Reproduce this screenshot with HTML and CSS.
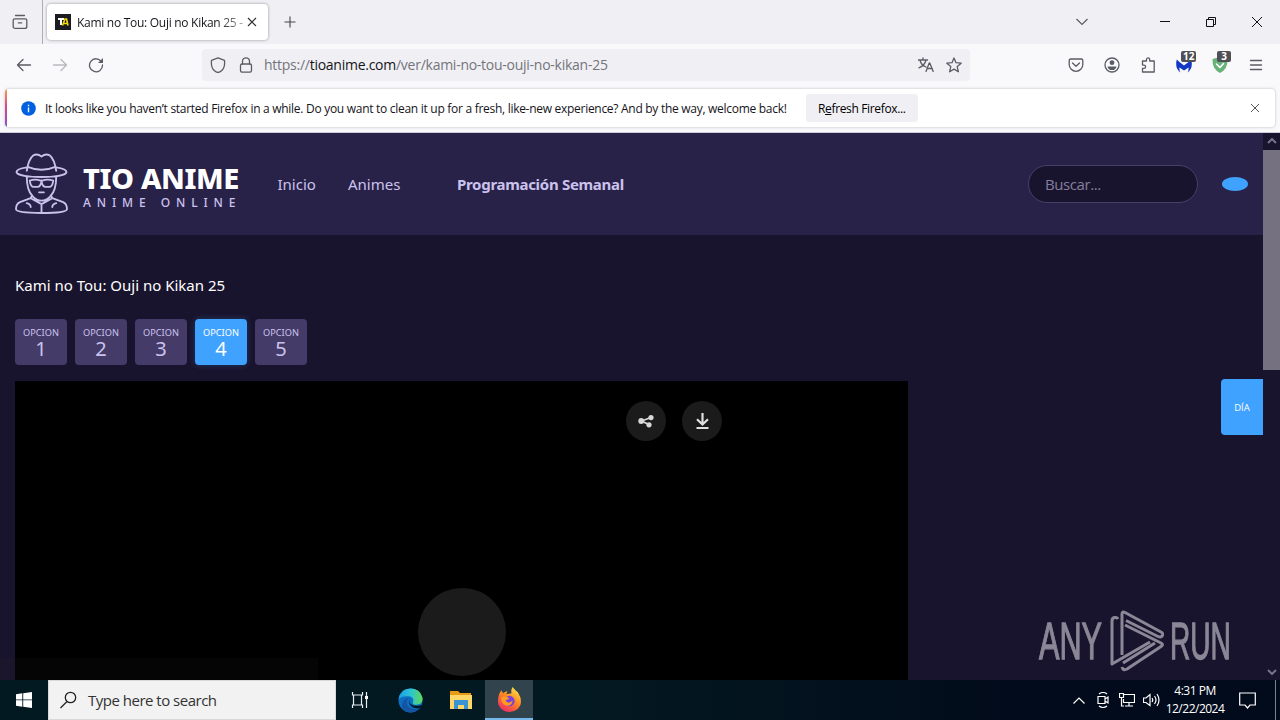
FILE: index.html
```
<!DOCTYPE html>
<html lang="es">
<head>
<meta charset="utf-8">
<title>Kami no Tou: Ouji no Kikan 25 - TioAnime</title>
<link rel="stylesheet" href="styles.css">
</head>
<body>
<div class="screen">
  <div class="tabbar">
    <div class="firefox-view"><svg class="i16" viewBox="0 0 16 16"><path d="M3.500 1.500h9M2.600 4.800h10.800q1.400 0 1.400 1.400v6.200q0 2-2 2H3.200q-2 0-2-2V6.200Q1.200 4.800 2.600 4.800zM6.300 8.800h3.400"/></svg></div>
    <div class="tab">
      <svg class="favicon" viewBox="0 0 16 16"><rect width="16" height="16" fill="#1c1b22"/><path d="M3 5h6M6 5v6" stroke="#fff" stroke-width="2" fill="none"/><path d="M7.500 11.500 10 5h1.500L13 11.500M9 9.500h3" stroke="#f5d90a" stroke-width="1.600" fill="none"/></svg>
      <span class="tab-title">Kami no Tou: Ouji no Kikan 25 -</span>
      <svg class="tab-close" viewBox="0 0 10 10"><path d="M1 1l8 8M9 1l-8 8"/></svg>
    </div>
    <svg class="newtab" viewBox="0 0 12 12"><path d="M6 .5v11M.5 6h11"/></svg>
    <div class="window-controls">
      <svg class="chev" viewBox="0 0 12 8"><path d="M.5 1 6 6.500 11.500 1"/></svg>
      <svg class="wc min" viewBox="0 0 10 10"><path d="M0 4.500h10"/></svg>
      <svg class="wc restore" viewBox="0 0 10 10"><path d="M.5 2.500h7v7h-7zM2.500 2.500v-2h7v7h-2"/></svg>
      <svg class="wc" viewBox="0 0 10 10"><path d="M0 0l10 10M10 0 0 10"/></svg>
    </div>
  </div>

  <div class="toolbar">
    <svg class="i16 back" viewBox="0 0 16 16"><path d="M14.500 8H1.500M7 2.500 1.500 8 7 13.500"/></svg>
    <svg class="i16 forward" viewBox="0 0 16 16"><path d="M1.500 8h13M9 2.500 14.500 8 9 13.500"/></svg>
    <svg class="i16 reload" viewBox="0 0 16 16"><path d="M13.500 4.800A6.500 6.500 0 1 0 14.500 8"/><path d="M15 1v5h-5z" fill="#5b5b66" stroke="none"/></svg>
    <div class="urlbar">
      <svg class="i16 shield" viewBox="0 0 16 16"><path d="M8 .8 14.500 3.300q.7 7-2.500 10Q10 15.200 8 15.500 6 15.200 4 13.300.800 10.300 1.500 3.300z"/></svg>
      <svg class="i16 lock" viewBox="0 0 16 16"><rect x="2.500" y="7" width="11" height="8.200" rx="1.600"/><path d="M4.500 7V4.300a3.500 3.500 0 0 1 7 0V7"/></svg>
      <span class="url">https://<b>tioanime.com</b>/ver/kami-no-tou-ouji-no-kikan-25</span>
      <svg class="i16 translate" viewBox="0 0 16 16"><path d="M.5 3h9M5 .8V3M2 3q1 5 6 7M8 3Q7 8 1 10.800M8 14.500l3.200-8.500h.6l3.400 8.500M9.300 11.500h5"/></svg>
      <svg class="i16 star" viewBox="0 0 16 16"><path d="M8 1l2 4.700 5.200.5-4 3.400 1.200 5.200L8 12.100l-4.400 2.700 1.200-5.200-4-3.400L6 5.700z"/></svg>
    </div>
    <div class="tools">
      <svg class="i16 pocket" viewBox="0 0 16 16"><path d="M2.700 2h10.600q1.500 0 1.500 1.500V7.500a6.800 6.800 0 0 1-13.600 0V3.500Q1.200 2 2.700 2zM4.500 6 8 9.300 11.500 6"/></svg>
      <svg class="i16" viewBox="0 0 16 16"><circle cx="8" cy="8" r="7"/><circle cx="8" cy="5.700" r="2.400" fill="#5b5b66" stroke="none"/><path d="M3.500 9.400h9q-.8 3.600-4.500 3.600T3.500 9.400z" fill="#5b5b66" stroke="none"/></svg>
      <svg class="i16" viewBox="0 0 16 16"><path d="M2.500 4h4V2.500a1.600 1.600 0 0 1 3.200 0V4h4.500v11H2.500v-3.700H4a1.600 1.600 0 0 0 0-3.200H2.500z"/></svg>
      <div class="ext"><svg class="i16" viewBox="0 0 16 16"><path d="M4.500 15.500Q-1.500 11 .8 2.500 3 5 8 8.500 13 5 15.200 2.500 17.500 11 11.500 15.500q1.500-2.500 1-5L8 13.500l-4.500-3q-.5 2.500 1 5z" fill="#1437c8" stroke="none"/></svg><span class="badge">12</span></div>
      <div class="ext"><svg class="i16" viewBox="0 0 16 16"><path d="M8 0 15.500 2q.5 10-7.500 14Q0 12 .5 2z" fill="#67b279" stroke="none"/><path d="M4.500 7 8 10.500 11.500 6.500" stroke="#fff" stroke-width="1.600"/></svg><span class="badge">3</span></div>
      <svg class="i16 menu" viewBox="0 0 16 16"><path d="M2.500 3.500h11M2.500 8h11M2.500 12.500h11"/></svg>
    </div>
  </div>

  <div class="notice-row">
    <div class="notice">
      <svg class="info" viewBox="0 0 16 16"><circle cx="8" cy="8" r="7.800" fill="#0060df"/><path d="M8 7v5M8 4v1.500" stroke="#fff" stroke-width="1.500"/></svg>
      <span class="notice-text">It looks like you haven’t started Firefox in a while. Do you want to clean it up for a fresh, like-new experience? And by the way, welcome back!</span>
      <div class="refresh"><span>R<u>e</u>fresh Firefox...</span></div>
      <svg class="notice-close" viewBox="0 0 10 10"><path d="M1 1l8 8M9 1l-8 8"/></svg>
    </div>
  </div>

  <div class="viewport">
    <div class="site">
      <div class="header">
        <svg class="logo" viewBox="0 0 54 62"><path d="M12 18q2-12 6.500-15.500 4-2.500 8.500 1 4.500-3.500 8.500-1Q40 6 42 18M13 14q14 6 28 0M12 14.500C4 15.500 1.500 17.500 1.500 19.500c2 6.500 49 6.500 51 0 0-2-3-4-10.500-5M12 24q0 14 6 20 4 4.500 9 4.500t9-4.500q6-6 6-20M15 28q6-2 11 0h2q5-2 11 0-1 6.500-4 6.500h-4q-3 0-4-5.500-1 5.500-4 5.500h-4q-3 0-4-6.500M24.500 40h5M17 44l-1 2-11 4q-4 2-4 7 0 4 26 4t26-4q0-5-4-7l-11-4-1-2M16 46l11 6 11-6M27 52v9M12 51q4 1 4 4M42 51q-4 1-4 4"/></svg>
        <div class="brand"><span class="brand-name">TIO ANIME</span><span class="brand-sub">ANIME ONLINE</span></div>
        <span class="nav n1">Inicio</span><span class="nav n2">Animes</span><span class="nav n3">Programación Semanal</span>
        <div class="search">Buscar...</div>
        <span class="pill"></span>
      </div>
      <div class="content">
        <h1 class="title"><span>Kami no Tou: Ouji no Kikan 25</span></h1>
        <div class="options">
          <div class="option"><small>OPCION</small><span>1</span></div>
          <div class="option"><small>OPCION</small><span>2</span></div>
          <div class="option"><small>OPCION</small><span>3</span></div>
          <div class="option active"><small>OPCION</small><span>4</span></div>
          <div class="option"><small>OPCION</small><span>5</span></div>
        </div>
        <div class="player">
          <div class="player-actions">
            <div class="round"><svg viewBox="0 0 16 16"><path d="M13 4.500 3.500 8l8 3.800" fill="none" stroke="#d8d8d8" stroke-width="1.700"/><g fill="#d8d8d8"><circle cx="13" cy="4.600" r="2.600"/><circle cx="3.200" cy="8" r="2.900"/><circle cx="11" cy="11.800" r="2.600"/></g></svg></div>
            <div class="round"><svg viewBox="0 0 16 16"><path d="M8.500 0v11M3 6.300l5.500 5.200L14 6.300M2.500 15h12" fill="none" stroke="#e0e0e0" stroke-width="2.200"/></svg></div>
          </div>
          <div class="play"></div>
        </div>
      </div>
      <div class="day">DÍA</div>
      <div class="status-hint"></div>
      <div class="watermark">
        <span class="wm any">ANY</span>
        <svg class="wm-logo" viewBox="0 0 54 62"><path d="M8 9Q7 7 4.500 7.500 2 8 2 11v43l38-22M12 45V4q0-3 3-1.500L51 22q3 2 1 4-1.500 2-6-.5L16 10.500M15 15l36 18q3 1.500 0 3.500L17 59q-4 2-5-2M13 53l32-20"/></svg>
        <span class="wm run">RUN</span>
      </div>
    </div>
    <div class="scrollbar">
      <svg class="arrow" viewBox="0 0 10 6"><path d="M1 5 5 1l4 4"/></svg>
      <div class="thumb"></div>
      <svg class="arrow down" viewBox="0 0 10 6"><path d="M1 1l4 4 4-4"/></svg>
    </div>
  </div>

  <div class="taskbar">
    <div class="cell"><svg width="16" height="16" viewBox="0 0 16 16"><path d="M0 2.200 6.300 1.300V7.500H0zM7.200 1.200 16 0v7.500H7.200zM0 8.300h6.300v6.400L0 13.800zM7.200 8.300H16V16L7.200 14.800z" fill="#fff"/></svg></div>
    <div class="tasksearch"><svg width="18" height="18" viewBox="0 0 18 18"><circle cx="10.500" cy="6.500" r="5.200"/><path d="M7 10.500.5 17"/></svg><span>Type here to search</span></div>
    <div class="cell"><svg width="18" height="18" viewBox="0 0 18 18" fill="none" stroke="#e8eef0" stroke-width="1.200"><path d="M1.500 1v3h10V1M1.500 17v-3h10v3M2.500 4v10M10.500 4v10M15.500 1v16"/><path d="M14 5h3v3h-3z" fill="#fff" stroke="none"/></svg></div>
    <div class="cell edge"><svg width="25" height="25" viewBox="0 0 24 24"><defs><linearGradient id="eg" x1="0" x2="1"><stop offset="0" stop-color="#1b9de2"/><stop offset=".5" stop-color="#2cc3d5"/><stop offset="1" stop-color="#62d957"/></linearGradient></defs><circle cx="12" cy="12" r="11.500" fill="#0c6fc4"/><path d="M.6 11Q2 .5 12 .5 21 .5 23.500 9q1 7-6 7-4 0-3-3 1-4-4-5Q4 7 .6 11z" fill="url(#eg)"/><path d="M10.500 9.500q-4 3-1 8 4 5 12 1-4 5-10 5Q2 22 4 15q1-5 6.500-5.500z" fill="#1554a0"/><path d="M11.500 10q-2 3 1 5.500t9.500 1l1 .5-1 1.800q-6 1.700-9.500-1.500-3.500-4-1-7.300z" fill="#031921"/></svg></div>
    <div class="cell"><svg width="22" height="20" viewBox="0 0 22 20"><path d="M0 1h8l2 2h11v5H0z" fill="#e89a13"/><path d="M0 5h22v14H0z" fill="#ffd768"/><path d="M4 19v-9h14v9h-4v-4H8v4z" fill="#3b93d3"/></svg></div>
    <div class="cell fx"><svg width="25" height="25" viewBox="0 0 24 24"><defs><linearGradient id="fg" x1=".8" y1="0" x2=".2" y2="1"><stop offset="0" stop-color="#ffe74a"/><stop offset=".45" stop-color="#ff8a1f"/><stop offset="1" stop-color="#f0246c"/></linearGradient></defs><path d="M2 7 4 3l2 3q2-2 4-2l-1 3 5-1q-1-3 1-6 3 4 5 5l1 2q2 3 2 7a11 10 0 0 1-22 0q0-4 1-7z" fill="url(#fg)"/><circle cx="12" cy="13.500" r="5" fill="#7b42d8"/><path d="M4 10q4-2 8 1l-4 2q3 4 7 0-1 7-8 4-3-2-3-7z" fill="#ff9a22"/></svg></div>
    <div class="tray">
      <svg class="up" viewBox="0 0 12 7"><path d="M.5 6.500 6 1l5.500 5.500"/></svg>
      <svg class="meet" viewBox="0 0 12 16"><path d="M1 4.500h7v7H1zM8 7l3-2v6L8 9M2 2q4-3 8 0M2 14q4 3 8 0"/></svg>
      <svg class="net" viewBox="0 0 16 14"><path d="M5 1.500h10.500v8H4.500V6M10 9.500V13M6 13h8M.5.5h4v4h-4zM2.500 4.500V13H5"/></svg>
      <svg class="vol" viewBox="0 0 17 14"><path d="M.5 5h2.500l4-3.500v11L3 9.500H.5zM9 5q1.500 2 0 4M11.500 3q3 4 0 8M14 1q4 6 0 12"/></svg>
      <div class="clock"><span>4:31 PM</span><span class="date">12/22/2024</span></div>
      <svg class="note" viewBox="0 0 17 17"><path d="M.7 1h15.600v12H11l-2.500 3L6 13H.7z"/></svg>
      <span class="desk"></span>
    </div>
  </div>
</div>
</body>
</html>
```
FILE: styles.css
```
* { box-sizing: border-box; }
body { margin: 0; font-family: "Open Sans", "Noto Sans", sans-serif; overflow: hidden; }
.screen { width: 1280px; height: 720px; display: flex; flex-direction: column; white-space: nowrap; }
svg { flex: none; display: block; }
.i16 { width: 16px; height: 16px; fill: none; stroke: #5b5b66; stroke-width: 1.300; stroke-linejoin: round; stroke-linecap: round; }

.tabbar { height: 44px; background: #f0f0f4; display: flex; align-items: center; flex: none; }
.firefox-view { width: 43px; height: 44px; border-right: 1px solid #aeaeb5; padding: 14px 0 0 12px; }
.tab { width: 221px; height: 36px; margin-left: 4px; background: #fff; border-radius: 4px; box-shadow: 0 0 3px rgba(0,0,0,.4); display: flex; align-items: center; padding-left: 8px; }
.favicon { width: 16px; height: 16px; }
.tab-title { width: 167px; margin-left: 6px; overflow: hidden; font-size: 12px; letter-spacing: -.28px; color: #15141a; -webkit-mask-image: linear-gradient(90deg, #000 140px, rgba(0,0,0,.35) 167px); mask-image: linear-gradient(90deg, #000 140px, rgba(0,0,0,.35) 167px); }
.tab-close { width: 10px; height: 10px; margin-left: 3px; stroke: #333; stroke-width: 1.200; }
.newtab { width: 12px; height: 12px; margin-left: 16px; stroke: #444; stroke-width: 1.100; }
.window-controls { margin-left: auto; display: flex; align-items: center; padding-right: 18px; }
.chev { width: 12px; height: 8px; fill: none; stroke: #5b5b66; stroke-width: 1.200; margin-right: 72px; }
.wc { width: 10px; height: 10px; fill: none; stroke: #111; stroke-width: 1; }
.wc.min, .wc.restore { margin-right: 36px; }

.toolbar { height: 44px; background: #f9f9fb; display: flex; align-items: center; flex: none; padding: 0 16px 3px; }
.forward { margin-left: 20px; opacity: .4; }
.reload { margin-left: 20px; }
.urlbar { width: 768px; height: 32px; margin: 0 0 0 98px; background: #f0f0f4; border-radius: 4px; display: flex; align-items: center; padding: 0 8px; }
.lock { margin-left: 12px; }
.url { font-size: 14px; letter-spacing: -.26px; color: #74747c; margin-left: 10px; }
.url b { font-weight: 400; color: #15141a; }
.translate { margin-left: auto; }
.star { margin-left: 12px; }
.tools { margin-left: auto; display: flex; gap: 20px; }
.ext { position: relative; }
.badge { position: absolute; left: 5px; top: -6px; height: 11px; background: #4f4f55; color: #fff; border-radius: 2px; font: bold 10px/11px "Open Sans", sans-serif; padding: 0 2px; min-width: 14px; text-align: center; }

.notice-row { height: 45px; background: #f9f9fb; padding: 1px 5px 0; flex: none; border-bottom: 1px solid #ccccda; }
.notice { height: 38px; background: linear-gradient(#ff9a4a, #d44a8c 45%, #8a50c8) 0 0 / 2px 100% no-repeat, #fff; border-radius: 4px; box-shadow: 0 0 3px rgba(0,0,0,.25); display: flex; align-items: center; padding: 0 15px 0 16px; }
.info { width: 15px; height: 15px; }
.notice-text { font-size: 12px; margin-left: 9px; width: 743px; letter-spacing: -.285px; color: #15141a; }
.refresh { width: 112px; height: 28px; margin-left: 18px; background: #f0f0f4; border-radius: 3px; font-size: 12px; letter-spacing: -.35px; display: flex; align-items: center; padding-left: 12px; }
.notice-close { width: 10px; height: 10px; margin-left: auto; stroke: #555; }

.viewport { flex: 1; min-height: 0; display: flex; }
.site { width: 1263px; background: #19142d; position: relative; overflow: hidden; }
.header { height: 102px; background: #282148; display: flex; align-items: center; padding-left: 15px; color: #cbc3ee; font-size: 16px; }
.logo { width: 53px; height: 61px; margin-top: -1px; fill: none; stroke: #c9c1ea; stroke-width: 1.900; stroke-linejoin: round; stroke-linecap: round; }
.brand { width: 156px; margin: 4px 0 0 15px; display: flex; flex-direction: column; }
.brand-name { font: 800 29px/30px "Noto Sans", sans-serif; letter-spacing: -.4px; color: #fff; }
.brand-sub { font: 500 12px/15px "Noto Sans", sans-serif; letter-spacing: 5.900px; margin-top: 2px; }
.nav { font-family: "Noto Sans", sans-serif; font-size: 15px; }
.n1 { width: 70.500px; margin-left: 38.500px; }
.n2 { width: 109px; }
.n3 { font-weight: bold; letter-spacing: -.3px; }
.search { width: 170px; height: 38px; margin-left: auto; border: 1px solid #47406a; border-radius: 19px; background: #19142d; color: #857f9d; font-size: 15px; letter-spacing: -.4px; line-height: 36px; padding-left: 16px; }
.pill { width: 26px; height: 14px; border-radius: 50%; background: #3fa2ff; margin: 0 15px 0 24px; }
.content { padding: 39px 15px 0; }
.title { margin: 0; font: 15px/22px "Noto Sans", sans-serif; color: #fff; }
.options { display: flex; gap: 8px; margin-top: 23px; }
.option { width: 52px; height: 46px; border-radius: 4px; background: #443b68; color: #cbc3ee; display: flex; flex-direction: column; align-items: center; padding-top: 7px; font: 20px/19px "Noto Sans", sans-serif; }
.option small { font-size: 9.200px; line-height: 13px; }
.option.active { background: #3fa2ff; color: #fff; box-shadow: 0 0 6px rgba(63,162,255,.25); }
.player { width: 893px; height: 504px; margin-top: 16px; background: #000; padding-top: 20px; display: flex; flex-direction: column; align-items: center; }
.player-actions { display: flex; gap: 16px; padding-left: 425px; }
.round { width: 40px; height: 40px; border-radius: 50%; background: #1b1b1b; display: flex; align-items: center; justify-content: center; }
.round svg { width: 16px; height: 16px; }
.play { width: 88px; height: 88px; border-radius: 50%; background: #1b1b1b; margin-top: 147px; }
.day { position: absolute; right: 0; top: 246px; width: 42px; height: 56px; background: #3fa2ff; border-radius: 4px 0 0 4px; color: #fff; font-size: 9.500px; line-height: 57px; text-align: center; }
.status-hint { position: absolute; left: 0; bottom: 0; width: 318px; height: 22px; background: rgba(50,40,45,.12); }
.watermark { position: absolute; left: 1039px; bottom: 8px; height: 62px; display: flex; align-items: center; color: #8b8797; }
.wm { font: 52px/62px "Liberation Sans Narrow", "Liberation Sans", sans-serif; transform-origin: 0 50%; -webkit-text-stroke: 1.300px #8b8797; }
.any { width: 71px; transform: scaleX(.59); }
.run { width: 64px; transform: scaleX(.54); }
.wm-logo { width: 54px; height: 62px; margin: 0 6px 0 0; fill: none; stroke: #8b8797; stroke-width: 3; stroke-linejoin: round; }
.scrollbar { width: 17px; background: #19142d; display: flex; flex-direction: column; align-items: center; }
.arrow { width: 10px; height: 6px; margin: 5px 0 6px; fill: none; stroke: #77738a; stroke-width: 2; }
.thumb { width: 17px; height: 220px; background: #757180; }
.arrow.down { margin-top: auto; margin-bottom: 5px; }

.taskbar { height: 40px; background: linear-gradient(90deg, #031921 0, #031921 45%, #020b1b 80%, #020b1b); display: flex; flex: none; }
.cell { width: 48px; display: flex; align-items: center; justify-content: center; }
.edge { width: 53px; }
.fx { background: #31434d; border-bottom: 2px solid #76b9ed; }
.tasksearch { width: 288px; background: #f2f2f2; border: 1px solid #d9d9d9; display: flex; align-items: center; padding-left: 11px; font-size: 15px; color: #333; letter-spacing: -.5px; }
.tasksearch span { margin-left: 10px; }
.tasksearch svg { fill: none; stroke: #222; stroke-width: 1.300; }
.tray { margin-left: auto; display: flex; align-items: center; color: #fff; font-size: 12px; line-height: 18px; }
.tray svg { fill: none; stroke: #fff; stroke-width: 1.200; }
.up { width: 12px; height: 7px; }
.meet { width: 12px; height: 16px; margin-left: 12px; }
.net { width: 16px; height: 14px; margin-left: 10px; }
.vol { width: 17px; height: 14px; margin-left: 8px; }
.clock { width: 60px; margin-left: 5px; display: flex; flex-direction: column; align-items: center; letter-spacing: -.5px; }
.note { width: 17px; height: 17px; margin-left: 14px; }
.desk { width: 1px; height: 40px; background: #7b828b; margin: 0 4px 0 19px; }
```
